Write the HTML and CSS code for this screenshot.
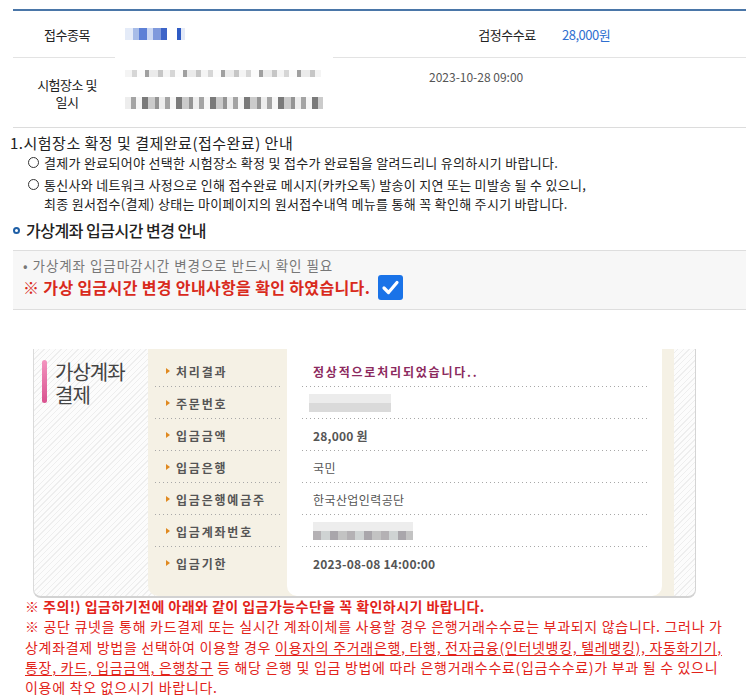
FILE: index.html
```html
<!DOCTYPE html>
<html>
<head>
    <meta charset="utf-8">
    <title>원서접수 결제완료</title>
    <link rel="stylesheet" href="styles.css">
</head>
<body>
<div class="page">
    <div class="info">
        <div class="info-row row-top">
            <div class="info-label">접수종목</div>
            <div class="info-value"><span class="mosaic mosaic-blue"></span></div>
            <div class="info-label">검정수수료</div>
            <div class="info-value fee">28,000원</div>
        </div>
        <div class="info-row row-place">
            <div class="info-label">시험장소 및<br>일시</div>
            <div class="info-value place">
                <div class="redact">
                    <span class="mosaic mosaic-line1"></span>
                    <span class="mosaic mosaic-line2"></span>
                </div>
                <span class="exam-date">2023-10-28 09:00</span>
            </div>
        </div>
    </div>

    <h3 class="notice-title">1.시험장소 확정 및 결제완료(접수완료) 안내</h3>
    <ul class="notice-list">
        <li>결제가 완료되어야 선택한 시험장소 확정 및 접수가 완료됨을 알려드리니 유의하시기 바랍니다.</li>
        <li>통신사와 네트워크 사정으로 인해 접수완료 메시지(카카오톡) 발송이 지연 또는 미발송 될 수 있으니,<br>최종 원서접수(결제) 상태는 마이페이지의 원서접수내역 메뉴를 통해 꼭 확인해 주시기 바랍니다.</li>
    </ul>

    <h4 class="sub-title"><span class="ring"></span>가상계좌 입금시간 변경 안내</h4>
    <div class="confirm-box">
        <p class="confirm-desc">• 가상계좌 입금마감시간 변경으로 반드시 확인 필요</p>
        <div class="confirm-line">
            <span>※ 가상 입금시간 변경 안내사항을 확인 하였습니다.</span>
            <svg class="check" width="25" height="25" viewBox="0 0 25 25">
                <rect width="25" height="25" rx="3" fill="#1a73e8"/>
                <path d="M6 13 L10.5 17.5 L19 7.5" fill="none" stroke="#fff" stroke-width="3.2" stroke-linecap="round" stroke-linejoin="round"/>
            </svg>
        </div>
    </div>

    <div class="pay-panel">
        <div class="pay-title"><span class="pink-bar"></span><span class="pay-name">가상계좌<br>결제</span></div>
        <div class="pay-body">
            <div class="pay-labels">
                <div class="pay-row"><i class="arrow"></i>처리결과</div>
                <div class="pay-row"><i class="arrow"></i>주문번호</div>
                <div class="pay-row"><i class="arrow"></i>입금금액</div>
                <div class="pay-row"><i class="arrow"></i>입금은행</div>
                <div class="pay-row"><i class="arrow"></i>입금은행예금주</div>
                <div class="pay-row"><i class="arrow"></i>입금계좌번호</div>
                <div class="pay-row"><i class="arrow"></i>입금기한</div>
            </div>
            <div class="pay-values">
                <div class="pay-row result">정상적으로처리되었습니다..</div>
                <div class="pay-row"><span class="mosaic mosaic-order"></span></div>
                <div class="pay-row strong">28,000 원</div>
                <div class="pay-row">국민</div>
                <div class="pay-row">한국산업인력공단</div>
                <div class="pay-row"><span class="mosaic mosaic-account"></span></div>
                <div class="pay-row strong">2023-08-08 14:00:00</div>
            </div>
        </div>
        <div class="pay-side"></div>
    </div>

    <div class="caution">
        <p class="caution-head">※ 주의!) 입금하기전에 아래와 같이 입금가능수단을 꼭 확인하시기 바랍니다.</p>
        <p>※ 공단 큐넷을 통해 카드결제 또는 실시간 계좌이체를 사용할 경우 은행거래수수료는 부과되지 않습니다. 그러나 가<br>상계좌결제 방법을 선택하여 이용할 경우 <u>이용자의 주거래은행, 타행, 전자금융(인터넷뱅킹, 텔레뱅킹), 자동화기기,<br>통장, 카드, 입금금액, 은행창구</u> 등 해당 은행 및 입금 방법에 따라 은행거래수수료(입금수수료)가 부과 될 수 있으니<br>이용에 착오 없으시기 바랍니다.</p>
    </div>
</div>
</body>
</html>
```

FILE: styles.css
```css
body {
    margin: 0;
    font-family: "Noto Sans CJK KR", "Noto Sans", sans-serif;
    color: #222;
    background: #fff;
}
.page {
    padding: 9px 0 0 13px;
    overflow: hidden;
}

/* top info table */
.info {
    border-top: 2px solid #4a76a8;
}
.info-row {
    display: grid;
    grid-template-columns: 108px 1fr 94px 192px;
    border-bottom: 1px solid #e3e3e3;
    box-sizing: border-box;
    font-size: 13px;
    letter-spacing: -0.5px;
}
.row-top {
    height: 47px;
}
.row-place {
    height: 70px;
    grid-template-columns: 108px 1fr;
    border-bottom-color: #dcdcdc;
}
.info-label {
    display: flex;
    align-items: center;
    justify-content: center;
    text-align: center;
    line-height: 17px;
    color: #222;
}
.info-value {
    display: flex;
    align-items: center;
    padding-left: 4px;
}
.fee {
    padding-left: 8px;
    color: #2f6fd0;
}
.place {
    position: relative;
    align-items: flex-start;
    padding-top: 10px;
}
.redact {
    position: absolute;
    left: -6px;
    top: -8px;
    width: 218px;
    height: 76px;
    background: #fff;
}
.exam-date {
    margin-left: 304px;
    font-size: 12px;
    letter-spacing: 0;
    color: #555;
}

/* pixelated placeholders */
.mosaic {
    display: block;
    filter: blur(0.6px);
}
.mosaic-blue {
    width: 60px;
    height: 12px;
    background: linear-gradient(90deg, #e4ebf8 0 8px, #a7bce8 8px 14px, #5d80d6 14px 22px, #ccd8f2 22px 28px, #7f99dc 28px 36px, #3d64c8 36px 42px, #fff 42px 52px, #2f5bc4 52px 56px, #e3e9f7 56px 60px);
}
.mosaic-line1 {
    position: absolute;
    left: 10px;
    top: 20px;
    width: 196px;
    height: 7px;
    background: repeating-linear-gradient(90deg, #f4f4f4 0 7px, #d6d6d6 7px 12px, #fbfbfb 12px 20px, #a0a0a0 20px 24px, #ebebeb 24px 33px, #c6c6c6 33px 38px);
}
.mosaic-line2 {
    position: absolute;
    left: 10px;
    top: 47px;
    width: 198px;
    height: 12px;
    background: repeating-linear-gradient(90deg, #ededed 0 6px, #a4a4a4 6px 11px, #f6f6f6 11px 17px, #7a7a7a 17px 23px, #cbcbcb 23px 30px, #949494 30px 34px);
}
.mosaic-order {
    width: 82px;
    height: 18px;
    margin-left: -4px;
    background: linear-gradient(#ececec 0 9px, #dadada 9px 18px);
}
.mosaic-account {
    width: 100px;
    height: 18px;
    background:
        linear-gradient(#ededed 0 9px, transparent 9px),
        repeating-linear-gradient(90deg, #b4b1b4 0 8px, #cfd3d3 8px 17px, #a9a6ab 17px 25px, #c3c3c3 25px 34px);
}

/* notice */
.notice-title {
    margin: 5px 0 0 -3px;
    font-size: 15px;
    font-weight: 400;
    line-height: 20px;
    letter-spacing: 0.5px;
    color: #222;
}
.notice-list {
    list-style: none;
    margin: 0;
    padding: 0 0 0 15px;
    font-size: 13px;
    line-height: 19px;
    letter-spacing: 0.3px;
    color: #222;
}
.notice-list li {
    position: relative;
    padding-left: 16px;
    margin-bottom: 3px;
}
.notice-list li::before {
    content: "";
    position: absolute;
    left: 0;
    top: 4px;
    width: 9px;
    height: 9px;
    border: 1px solid #333;
    border-radius: 50%;
}
.sub-title {
    display: flex;
    align-items: center;
    margin: 6px 0 0;
    font-size: 16px;
    font-weight: 500;
    line-height: 22px;
    letter-spacing: -0.5px;
    color: #222;
}
.ring {
    width: 3px;
    height: 3px;
    border: 2px solid #1f5fa6;
    border-radius: 50%;
    margin-right: 6px;
}
.confirm-box {
    margin-top: 9px;
    padding: 5px 0 9px 10px;
    background: #f7f7f7;
    border-top: 1px solid #dedede;
    border-bottom: 1px solid #dedede;
}
.confirm-desc {
    margin: 0;
    font-size: 13.5px;
    line-height: 18px;
    letter-spacing: 0.95px;
    color: #777;
}
.confirm-line {
    display: flex;
    align-items: center;
    gap: 8px;
    height: 26px;
    font-size: 16px;
    font-weight: 700;
    letter-spacing: 0.35px;
    color: #d92a1c;
}
.check {
    display: block;
}

/* virtual account panel */
.pay-panel {
    display: flex;
    width: 663px;
    margin: 39px 0 0 20px;
    box-sizing: border-box;
    border-left: 1px solid #dadada;
    border-right: 1px solid #d4d4d4;
    border-bottom: 2px solid #d2d2d2;
    border-radius: 0 0 8px 8px;
    background: repeating-linear-gradient(135deg, #fcfcfc 0 3px, #eeeeee 3px 4px);
    overflow: hidden;
}
.pay-title {
    display: flex;
    width: 114px;
    padding: 11px 0 0 8px;
    box-sizing: border-box;
}
.pay-name {
    font-size: 20px;
    line-height: 23px;
    letter-spacing: -1px;
    color: #444;
}
.pink-bar {
    flex: none;
    width: 5px;
    height: 43px;
    margin-right: 8px;
    border-radius: 3px;
    background: linear-gradient(#f394bf, #d9528f);
}
.pay-body {
    display: flex;
    padding-right: 12px;
    background: #f5f1e5;
    border-radius: 0 0 0 10px;
}
.pay-labels {
    width: 139px;
    padding: 6px 7px 17px;
    box-sizing: border-box;
}
.pay-values {
    width: 375px;
    padding: 6px 15px 17px;
    box-sizing: border-box;
    background: #fff;
    border-radius: 0 0 10px 10px;
}
.pay-row {
    display: flex;
    align-items: center;
    height: 32px;
    background: linear-gradient(90deg, #a8a8a8 1px, transparent 1px) 0 100% / 4px 1px repeat-x;
    font-size: 12px;
    color: #555;
}
.pay-row:last-child {
    background: none;
}
.pay-labels .pay-row {
    font-weight: 700;
    letter-spacing: 1.8px;
    color: #555;
}
.pay-values .pay-row {
    padding-left: 11px;
    letter-spacing: 0.4px;
}
.pay-values .result {
    font-weight: 700;
    letter-spacing: 1.8px;
    color: #8c2a5e;
}
.pay-values .strong {
    font-weight: 700;
    letter-spacing: 0.2px;
}
.arrow {
    width: 0;
    height: 0;
    margin: 0 6px 0 11px;
    border-left: 4px solid #e0891f;
    border-top: 3px solid transparent;
    border-bottom: 3px solid transparent;
}
.pay-side {
    flex: 1;
}

/* caution text */
.caution {
    margin-top: -2px;
    padding-left: 12px;
    font-size: 14px;
    line-height: 20.3px;
    letter-spacing: 0.7px;
    color: #e2231a;
}
.caution p {
    margin: 0;
    white-space: nowrap;
}
.caution-head {
    font-weight: 700;
    letter-spacing: 0.45px;
}
.caution u {
    text-underline-offset: 2px;
}
```
